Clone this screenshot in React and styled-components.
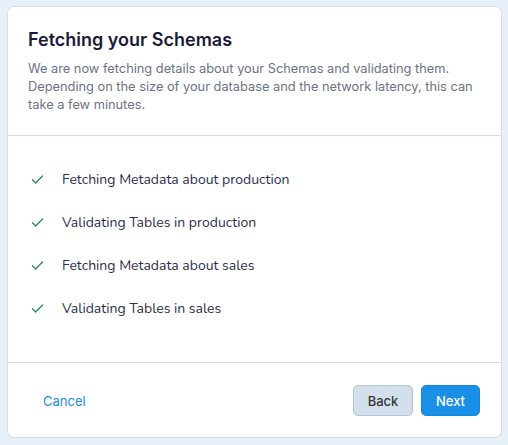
import React from 'react';
import styled, { createGlobalStyle } from 'styled-components';

const GlobalStyle = createGlobalStyle`
	html, body {
		margin: 0;
		padding: 0;
		background: #e8f0f9;
	}
	body {
		font-family: Inter, "Noto Sans", sans-serif;
	}
`;

const steps = [
	'Fetching Metadata about production',
	'Validating Tables in production',
	'Fetching Metadata about sales',
	'Validating Tables in sales',
];

function Check() {
	return (
		<svg width="15" height="15" viewBox="0 0 24 24" fill="none" stroke="#2a8a5a" strokeWidth="2.2" strokeLinecap="round" strokeLinejoin="round">
			<path d="M4 12.5l5 5L20 6.5" />
		</svg>
	);
}

export default function App() {
	return (
		<>
			<GlobalStyle />
			<Page>
				<Card>
					<Header>
						<Title>Fetching your Schemas</Title>
						<Description>
							We are now fetching details about your Schemas and validating them.
							Depending on the size of your database and the network latency, this can
							take a few minutes.
						</Description>
					</Header>
					<StepList>
						{steps.map((s) => (
							<Step key={s}>
								<IconSlot>
									<Check />
								</IconSlot>
								<span>{s}</span>
							</Step>
						))}
					</StepList>
					<Footer>
						<LinkButton>Cancel</LinkButton>
						<Actions>
							<Button variant="secondary">Back</Button>
							<Button variant="primary">Next</Button>
						</Actions>
					</Footer>
				</Card>
			</Page>
		</>
	);
}

const Page = styled.div`
	padding: 6px 6px 7px 7px;
	box-sizing: border-box;
	width: 508px;
	height: 445px;
`;

const Card = styled.div`
	background: #fff;
	border: 1px solid #d3dfeb;
	border-radius: 7px;
	height: 100%;
	box-sizing: border-box;
	display: flex;
	flex-direction: column;
`;

const Header = styled.div`
	padding: 21px 20px 21px 20px;
	border-bottom: 1px solid #d3dfeb;
`;

const Title = styled.h2`
	margin: 0 0 8px 0;
	font-size: 18px;
	line-height: 24px;
	font-weight: 600;
	color: #1a1a3c;
`;

const Description = styled.p`
	margin: 0;
	font-size: 12.8px;
	line-height: 18px;
	color: #6b7385;
`;

const StepList = styled.ul`
	list-style: none;
	margin: 0;
	padding: 22px 20px 0 20px;
	flex: 1;
	border-bottom: 1px solid #d3dfeb;
`;

const Step = styled.li`
	display: flex;
	align-items: center;
	height: 43px;
	font-family: Nunito, Lato, "Noto Sans", sans-serif;
	font-size: 14px;
	color: #2e2f4c;
`;

const IconSlot = styled.span`
	display: flex;
	width: 32px;
	padding-left: 2px;
`;

const Footer = styled.div`
	display: flex;
	align-items: center;
	justify-content: space-between;
	padding: 22px 21px 21px 21px;
`;

const LinkButton = styled.button`
	background: none;
	border: none;
	font-family: Inter, sans-serif;
	font-size: 13px;
	font-weight: 400;
	color: #1b8de2;
	padding: 0 14px;
	height: 31px;
	cursor: pointer;
`;

const Actions = styled.div`
	display: flex;
	gap: 8px;
`;

const Button = styled.button`
	height: 31px;
	width: ${(p) => (p.variant === 'primary' ? '59px' : '60px')};
	border-radius: 5px;
	font-family: Inter, sans-serif;
	font-size: 13px;
	font-weight: 500;
	cursor: pointer;
	border: 1px solid ${(p) => (p.variant === 'primary' ? '#1787de' : '#b3c4d6')};
	background: ${(p) => (p.variant === 'primary' ? '#1a8fe6' : '#d3e0ec')};
	color: ${(p) => (p.variant === 'primary' ? '#fff' : '#33363d')};
`;
